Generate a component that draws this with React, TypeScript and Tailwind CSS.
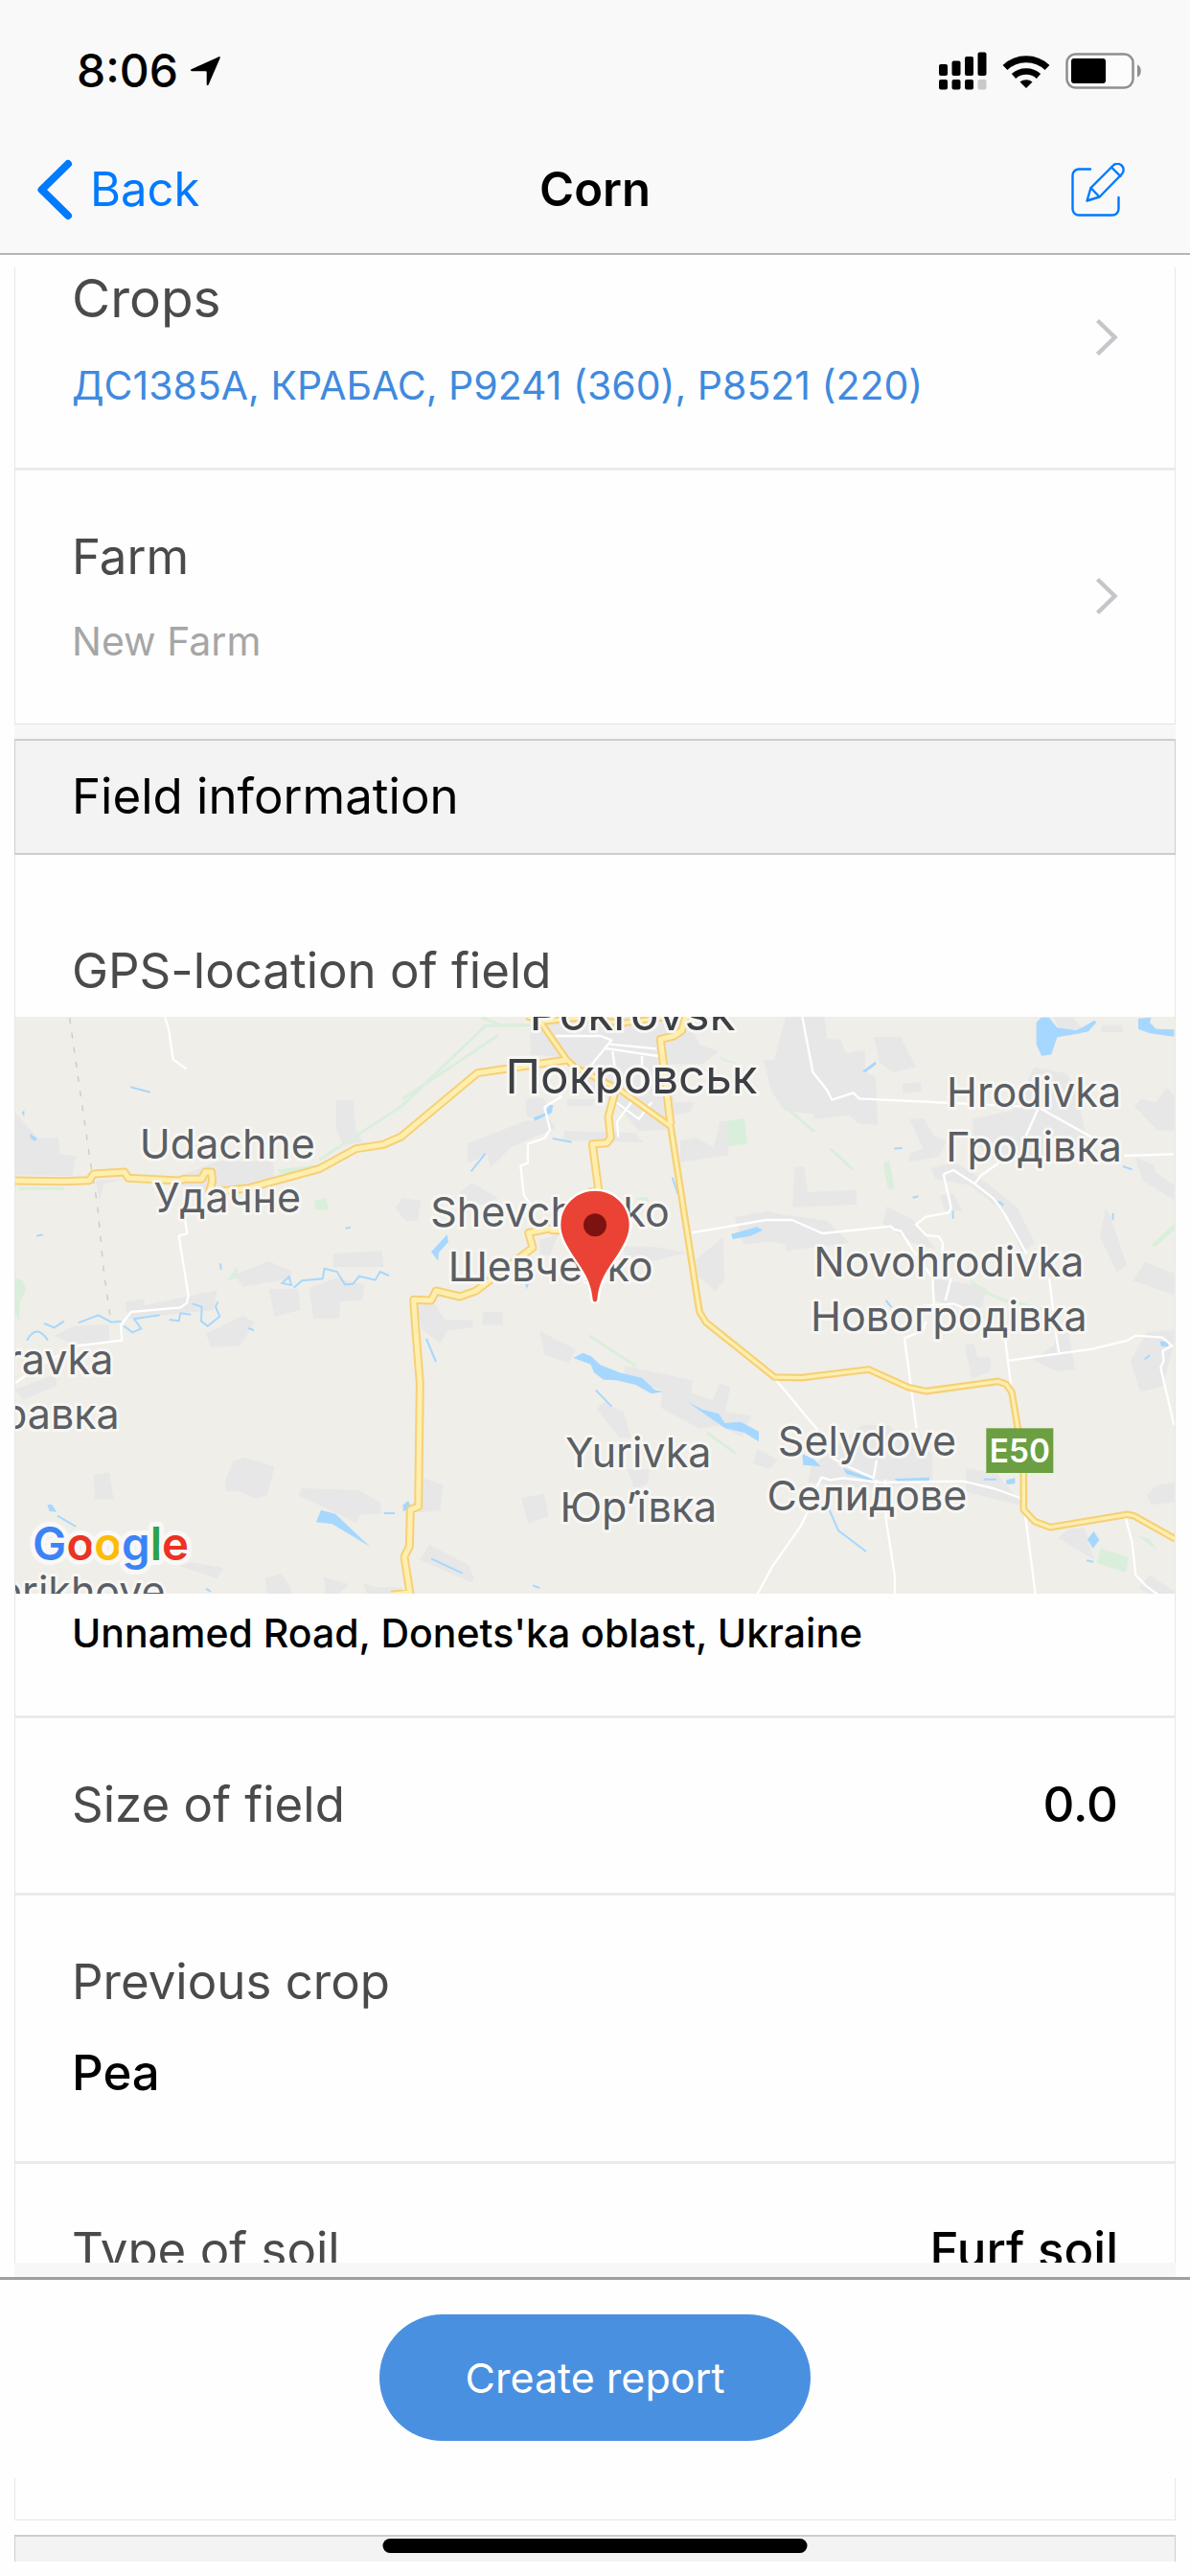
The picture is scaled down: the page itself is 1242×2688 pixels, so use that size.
import type { ReactNode } from 'react'
import { cx } from 'class-variance-authority'

interface MapLabelProps {
  x: number
  y: number
  children: string
  anchor?: 'start' | 'middle' | 'end'
  city?: boolean
}

interface RowProps {
  children: ReactNode
  last?: boolean
}

interface LinkRowProps {
  title: ReactNode
  value: string
  valueClassName: string
  last?: boolean
}

function StatusBar() {
  return (
    <div className="flex h-[132px] items-center justify-between pt-4 pr-[50px] pl-20">
      <div className="flex items-center gap-3">
        <span className="text-[48px] leading-[60px] font-medium">8:06</span>
        <svg viewBox="0 0 32 32" className="size-8" aria-hidden>
          <path d="M30.5 1.2c.9-.4 1.6.4 1.2 1.3L19.6 30.4c-.5 1.1-1.9.9-1.9-.3V17.3a1 1 0 0 0-1-1H2c-1.2 0-1.4-1.5-.3-2Z" />
        </svg>
      </div>
      <div className="flex items-center gap-4">
        <svg viewBox="0 0 50 40" className="h-10 w-[50px]" aria-hidden>
          <rect x="0" y="13" width="9" height="12" rx="2" />
          <rect x="13.5" y="9.5" width="9" height="15.5" rx="2" />
          <rect x="27" y="5" width="9" height="20" rx="2" />
          <rect x="40.5" y="0.5" width="9" height="24.5" rx="2" />
          <rect x="0" y="29" width="9" height="10.5" rx="2" />
          <rect x="13.5" y="29" width="9" height="10.5" rx="2" />
          <rect x="27" y="29" width="9" height="10.5" rx="2" />
          <rect x="40.5" y="29" width="9" height="10.5" rx="2" fill="#c9c9c9" />
        </svg>
        <svg viewBox="0 0 50 36" className="h-9 w-[50px]" aria-hidden>
          <path d="M3 14.5a32 32 0 0 1 44 0" fill="none" stroke="#000" strokeWidth="7" />
          <path d="M12 23.5a19.5 19.5 0 0 1 26 0" fill="none" stroke="#000" strokeWidth="6.5" />
          <path d="M18.5 29.6a10 10 0 0 1 13 0L25 36Z" />
        </svg>
        <svg viewBox="0 0 80 38" className="h-[38px] w-20" aria-hidden>
          <rect x="1.5" y="1.5" width="69" height="35" rx="9" fill="#fcfcfc" stroke="#8f8f8f" strokeWidth="2.5" />
          <rect x="6" y="6" width="36" height="26" rx="3" />
          <path d="M75 12.5c5 2 5 11 0 13Z" fill="#8f8f8f" />
        </svg>
      </div>
    </div>
  )
}

function NavBar() {
  return (
    <nav className="grid h-[132px] grid-cols-3 items-center px-[38px] text-[49px] leading-[60px]">
      <a href="#back" className="flex items-center gap-[18px] justify-self-start text-[#007aff]">
        <svg viewBox="0 0 38 64" className="h-16 w-[38px]" fill="none" aria-hidden>
          <path d="M33 5 5.5 32 33 59" stroke="currentColor" strokeWidth="8" strokeLinecap="round" strokeLinejoin="round" />
        </svg>
        Back
      </a>
      <h1 className="text-center font-semibold">Corn</h1>
      <button type="button" aria-label="Edit" className="mr-[30px] justify-self-end text-[#007aff]">
        <svg
          viewBox="0 0 56 56"
          className="size-14"
          fill="none"
          stroke="currentColor"
          strokeWidth="2.4"
          strokeLinecap="round"
          strokeLinejoin="round"
          aria-hidden
        >
          <path d="M20 6.5H8A6.5 6.5 0 0 0 1.5 13v35A6.5 6.5 0 0 0 8 54.5h35a6.5 6.5 0 0 0 6.5-6.5V36" />
          <path d="M16.5 39.5 20.5 26 43.5 3a6 6 0 0 1 9.5 8.5L29.5 35.5Z" />
          <path d="M20.5 26 29.5 35.5M42 4.500l9.500 9.500" />
        </svg>
      </button>
    </nav>
  )
}

function Chevron() {
  return (
    <svg viewBox="0 0 24 40" className="h-10 w-6 shrink-0" fill="none" aria-hidden>
      <path d="M2.5 2.5 20.5 20 2.5 37.5" stroke="#c5c5ca" strokeWidth="4.5" />
    </svg>
  )
}

function Row({ children, last = false }: RowProps) {
  return (
    <div className={cx('px-[59px] pt-[60px] pb-[62px]', last ? 'border-b border-[#e3e3e3]' : 'border-b-3 border-[#ebebeb]')}>
      {children}
    </div>
  )
}

function LinkRow({ title, value, valueClassName, last }: LinkRowProps) {
  return (
    <Row last={last}>
      <button type="button" className="flex w-full items-center justify-between text-left">
        <span className="flex flex-col gap-[34px]">
          {title}
          <span className={cx('text-[41px] leading-[48px]', valueClassName)}>{value}</span>
        </span>
        <Chevron />
      </button>
    </Row>
  )
}

function MapLabel({ x, y, children, anchor = 'middle', city = false }: MapLabelProps) {
  return (
    <text
      x={x}
      y={y}
      textAnchor={anchor}
      fontSize={city ? 148 : 129}
      fill={city ? '#3c3f43' : '#5b5f64'}
      stroke="#f7f6f3"
      strokeWidth="18"
      strokeLinejoin="round"
      paintOrder="stroke"
    >
      {children}
    </text>
  )
}

const builtUp = [
  'M48 332 118 412 182 410 188 462 238 468 226 530 48 528Z',
  'M1052 293h54l8 96 22 36-60 8-24-50Z',
  'M570 528 680 484h176v74L660 578 570 560Z',
  'M300 545 395 540 325 555 312 610Z',
  'M1044 774 1196 765 1202 815H1044Z',
  'M732 840 842 798 912 828v22l-150 28Z',
  'M842 884h92l6 66-80 20Z',
  'M968 880 1058 848l84 24-8 48-68 2-4 54h-80Z',
  'M392 925 450 915 455 935 570 910 680 888 668 950 400 978Z',
  'M230 1000 342 995v60H225l-55-25Z',
  'M645 1024 760 968 797 988 752 1062 660 1066Z',
  'M48 1198 170 1152 180 1185 72 1232Z',
  'M292 1466 342 1458 356 1543H297Z',
  'M706 1480 730 1424 766 1411 860 1440 836 1530 800 1540 750 1518 706 1518Z',
  'M935 1530 945 1508 1125 1514 1192 1554V1588L1130 1590 1115 1616Z',
  'M560 1750 600 1740 700 1758 680 1790Z',
  'M830 1790 880 1776 912 1820V1840H838Z',
  'M1014 1786 1092 1808 1060 1840H1020Z',
  'M1138 1806 1180 1818H1260V1840H1150Z',
  'M1238 630 1260 600 1318 608 1308 670 1270 672Z',
  'M1462 430 1640 360 1720 352 1740 380 1600 440 1535 506 1525 462 1466 490Z',
  'M1660 32H2150L2190 120 2250 140 2200 180H2100L2110 300 2176 300 2160 330 2105 340 2090 385 2000 390 1960 340 1900 280 1830 250 1780 160 1660 150Z',
  'M1645 290 1700 285 1730 330 1700 360 1650 345Z',
  'M1775 290H1858V312H1775Z',
  'M1765 390 1990 395 2012 425 1765 420Z',
  'M2130 420 2180 410 2235 442 2255 360 2282 358 2280 465 2130 488Z',
  'M1440 580 1478 552 1560 600 1520 620 1440 612Z',
  'M1950 750 2050 752 2150 770 2050 796 1960 800Z',
  'M1690 730 1750 712 1720 780 1690 776Z',
  'M1300 920 1360 930 1392 980 1480 982V1005L1400 1015 1378 1055 1320 1010Z',
  'M1512 955h62v42h-65Z',
  'M2180 790 2264 722 2268 855 2240 890 2180 840Z',
  'M2300 660 2400 640 2520 668 2640 740 2500 752 2410 735 2330 745Z',
  'M1690 1016 1804 1074 1780 1116 1705 1090Z',
  'M1955 1125 2170 1170 2164 1208 2230 1232 2255 1180 2286 1190 2270 1270 2352 1280 2325 1348 2250 1310 2190 1322 2068 1255 2075 1202 1955 1160Z',
  'M1868 1260 1890 1238 1952 1268 1976 1350 1940 1350Z',
  'M1322 1475 1388 1498 1378 1578 1310 1584Z',
  'M1632 1538 1704 1525 1718 1596 1654 1618Z',
  'M1962 1448H2032L2030 1490 1990 1515Z',
  'M1315 1732 1344 1684 1470 1750 1485 1794 1475 1802Z',
  'M2358 1430 2372 1384 2434 1418 2412 1448Z',
  'M2460 32h120l10 68 44 4 14 42 60-10v68l34 18 6 150-60-6-28-26-110 12-4-16-90-10-40-60-26-100h35Z',
  'M2736 95h84l48 94-70 18-44-32Z',
  'M2826 242 2884 236V266L2828 272Z',
  'M3238 190 3340 210 3370 260 3405 430 3310 470 3100 480 3046 410V352L3170 325Z',
  'M3448 58H3514V80H3448ZM3300 34 3360 34 3390 70 3320 74Z',
  'M2848 352 2892 350 2925 405 2965 420 2940 470 2846 486 2848 460 2890 445Z',
  'M2488 502h30l12 78 152-6v46l-200 8Z',
  'M2914 506 2990 485 3100 560 3185 630 3240 740 3200 770 3140 640 3040 560 2930 540Z',
  'M2942 592 2985 585 3014 640 2960 640Z',
  'M2776 626 2860 668 2930 760 2860 740 2764 680Z',
  'M3552 312 3572 290 3620 300 3652 254 3676 280V388H3625Z',
  'M3462 632 3478 660 3528 808 3498 832 3444 722Z',
  'M3546 858 3585 800 3676 835V902Z',
  'M3554 472 3615 498 3620 520 3676 560V605L3578 545Z',
  'M2920 850 3090 880 3075 940 3020 950 2930 920Z',
  'M2460 652 2590 670 2660 740 2460 765Z',
  'M3020 1058 3050 1054 3060 1098 3102 1098V1142L3042 1165Z',
  'M3234 1106 3300 1060 3310 1020 3345 1020 3366 1136 3310 1142Z',
  'M3540 1110 3590 1020 3676 1012V1050L3640 1190 3570 1205Z',
  'M3590 1530 3620 1500 3676 1490V1550L3605 1560Z',
  'M2530 1490 2540 1440 2700 1310 2780 1310 2920 1400V1480L2740 1510Z',
  'M3025 1446 3120 1460 3192 1548V1560L3025 1520Z',
  'M3312 1664 3345 1636 3395 1630 3425 1730Z',
  'M3565 1820 3600 1780 3676 1830V1840H3600Z',
]

const woods = [
  'M48 852 70 856 82 885 62 925 60 990 48 960Z',
  'M985 608 1020 600 1030 638 985 634Z',
  'M712 856 745 812 742 850Z',
  'M868 510 1000 495 980 512 880 525Z',
  'M2276 358 2330 350 2340 430 2280 436Z',
  'M2765 490 2785 482 2800 570 2780 572Z',
  'M2248 155 2330 188 2260 168Z',
  'M3445 1695 3535 1725 3525 1772 3435 1742Z',
  'M3560 1655 3600 1666 3625 1704Z',
  'M3600 750 3676 680V700L3620 750Z',
  'M1985 600 2030 596 2030 612Z',
]

const greenLines = [
  'M1000 480 1260 310 1520 60 1640 56',
  'M1260 290 1560 90',
  'M1510 34 1570 60 1660 58',
  'M60 570H200',
  'M2460 315 2550 392',
  'M2600 445 2670 510',
  'M3040 860Q3110 920 3200 930 3300 960 3370 960',
  'M1845 1030 1990 1125',
  'M2215 1335 2305 1400',
]

const lakes = [
  'M3245 50 3260 34 3285 34 3310 66 3370 74 3395 62 3425 44 3434 48 3408 78 3370 86 3310 96 3292 150 3262 155 3245 120Z',
  'M3564 38 3604 34 3600 50 3620 70 3676 72V94L3600 84 3564 70Z',
  'M94 398 116 412 110 422 96 412ZM68 332 76 324V346Z',
  'M1350 768 1400 714 1404 736 1374 770 1372 796Z',
  'M1670 348 1705 334 1720 308 1732 308 1728 332 1675 358Z',
  'M2290 712 2370 690 2388 700 2350 718 2294 728Z',
  'M1795 1100 1825 1084 1850 1094 1880 1122 1940 1146 2010 1162 2050 1200 2078 1206 2040 1212 1990 1184 1930 1170 1890 1168 1860 1146 1850 1120Z',
  'M2150 1236 2200 1262 2250 1274 2270 1304 2320 1300 2376 1330V1362L2330 1334 2270 1320 2220 1285Z',
  'M990 1614 1005 1576 1050 1588 1158 1690 1040 1620Z',
  'M2700 202 2740 172 2745 180 2710 206Z',
  'M3405 1668 3425 1642 3442 1670 3422 1696Z',
  'M148 1560 162 1558 178 1582 155 1580Z',
  'M2512 1400 2550 1418 2570 1440 2515 1435ZM2640 1445 2730 1478 2735 1486 2650 1464Z',
  'M2800 1478 2910 1474V1490L2810 1486Z',
  'M1262 1560 1278 1548 1290 1570 1262 1580Z',
  'M3150 1482 3178 1476V1494L3152 1496ZM3632 1048H3658V1064H3636Z',
  'M1645 870 1665 840 1650 885Z',
]

const streams = [
  'M408 252 470 268',
  'M84 1045Q115 990 150 1045M138 992 170 1005 200 985M245 990 308 966 348 988 380 985',
  'M388 1000 415 1020 442 1008 420 978 500 966M530 980 560 984 565 960 598 964M602 930 632 940 630 985 650 1000 688 970 675 940 682 924',
  'M883 866 905 846 912 872ZM920 880 945 858 1010 852 1016 820 1055 830 1080 870 1105 868 1125 844 1175 856 1190 830 1218 842',
  'M1475 516 1520 460',
  'M1730 413 1790 424',
  'M2105 535 2122 585',
  'M1335 1040 1365 1112',
  'M1865 1200 1915 1252',
  'M180 1594 238 1628',
  'M1350 1728 1448 1774',
  'M2595 1572 2625 1640 2712 1706',
  'M115 718 134 714M1082 694 1098 691M690 804 692 824M778 1006 795 1014M645 1822 660 1832M1202 1586H1236M1668 1812 1690 1820',
  'M2800 445 2825 442M2858 598 2875 594M2984 640V664M3126 610 3142 622M3485 646V668M2774 920 2792 942M3516 500 3545 510M3080 1480H3120M3584 1104 3600 1092M3402 1734 3424 1738',
]

const lanes = [
  'M516 32 528 70 542 165 584 196',
  'M575 640 586 710 560 718 590 905 585 928 565 942 410 956 378 998 382 1045 240 1062 130 1120 48 1178',
  'M1740 92H1880L1915 105 1850 185M1890 130 2060 155M1910 118 2055 132M1918 140 1925 190M2010 155V260',
  'M1760 280 1705 315 1722 385 1705 412 1653 430V490L1630 498 1640 590 1665 625',
  'M1930 300 2000 352 2040 300M1980 295 1932 360 1936 408',
  'M2165 708 2400 668 2480 668 2575 710 2790 688 2800 698 2820 702 2850 750 2920 850 2924 930',
  'M2512 32 2545 205 2590 262 2605 292 2672 270 2690 288 2980 302 3250 315 3420 410',
  'M3250 320 3210 410M3520 467 3676 462',
  'M3140 480 3070 530 3052 555M2954 525 2985 512 3052 555 3110 600 3145 648 3215 775',
  'M2954 525 2978 630 2970 645 2900 658 2868 682 2900 716 2940 720 2952 740 2950 790M2978 850 2960 920M2890 938 2985 930 3020 945',
  'M3285 850 3310 1050 3316 1085',
  'M2900 985 2890 1015 2832 1038 2870 1320M3145 1020 3165 1185',
  'M3160 1108 3420 1072 3530 1045 3555 1030 3640 1036 3670 1062 3640 1078 3644 1108 3634 1130 3676 1310',
  'M2430 1170 2560 1325M2600 1410 2660 1442 2735 1476 2745 1420M2530 1560 2572 1474 2600 1482 2640 1476 2760 1490 3015 1486 3110 1508 3195 1538',
  'M2745 1480 2740 1500M2540 1560 2505 1630 2420 1750 2372 1838',
  'M2772 1480 2775 1610 2802 1785V1840',
  'M3210 1590 3242 1840M3525 1600 3545 1680 3556 1780 3590 1815 3625 1840',
]

const highways = [
  'M48 545 200 547 280 544 293 524 390 518 402 537 560 545 575 540 632 540 642 518 662 518 665 545 655 582 780 568 1000 508 1115 445 1200 432 1255 408 1495 208 1775 167',
  'M1925 270 1905 345 1912 410 1900 427 1855 430 1875 580 1850 580 1830 700 1730 700 1720 695 1655 708 1668 755 1490 890 1440 908 1365 890 1350 920 1295 918 1300 990 1315 1180 1310 1565 1285 1575 1282 1690 1266 1722 1285 1845',
  'M2148 30 2135 75 2110 92 2068 102 2100 370',
  'M1225 1842 1285 1835',
]

const trunkRoads = [
  'M1650 30 1690 45 1775 167 1800 190 1940 260 2100 375 2190 955 2210 988 2425 1160 2510 1162 2720 1136 2845 1192 2900 1204 3125 1173 3150 1182 3168 1207 3187 1320 3205 1460V1575L3240 1612 3288 1630 3530 1590 3550 1594 3680 1667',
  'M1690 48 1800 36 1950 52 2080 34',
]

function FieldMap() {
  return (
    <svg
      viewBox="48 32 3630 1806"
      preserveAspectRatio="xMidYMid slice"
      className="block h-[602px] w-full bg-[#f0eee8]"
      role="img"
      aria-label="Map of the field location"
    >
      <path d={builtUp.join('')} fill="#e7e7e7" />
      <path d={woods.join('')} fill="#d9efdc" />
      <path d={greenLines.join('')} fill="none" stroke="#d9efdc" strokeWidth="9" />
      <path d={lakes.join('')} fill="#a6d8ff" />
      <path d={streams.join('')} fill="none" stroke="#a6d8ff" strokeWidth="6" />
      <path
        d="M218 36 250 260 285 500 305 620 325 830 345 970"
        fill="none"
        stroke="#c9c9c9"
        strokeWidth="4"
        strokeDasharray="18 28"
      />
      <path d={lanes.join('')} fill="none" stroke="#fff" strokeWidth="7" strokeLinejoin="round" />
      <g fill="none" strokeLinejoin="round">
        <path d={highways.join('')} stroke="#f6d077" strokeWidth="27" />
        <path d={trunkRoads.join('')} stroke="#f6d077" strokeWidth="23" />
        <path d={highways.join('')} stroke="#ffefae" strokeWidth="15" />
        <path d={trunkRoads.join('')} stroke="#ffefae" strokeWidth="10" />
      </g>

      <MapLabel x={712} y={475}>Udachne</MapLabel>
      <MapLabel x={712} y={645}>Удачне</MapLabel>
      <MapLabel x={1980} y={75} city>Pokrovsk</MapLabel>
      <MapLabel x={1977} y={273} city>Покровськ</MapLabel>
      <MapLabel x={1722} y={690}>Shevchenko</MapLabel>
      <MapLabel x={1724} y={861}>Шевченко</MapLabel>
      <MapLabel x={3237} y={315}>Hrodivka</MapLabel>
      <MapLabel x={3237} y={486}>Гродівка</MapLabel>
      <MapLabel x={2971} y={846}>Novohrodivka</MapLabel>
      <MapLabel x={2971} y={1017}>Новогродівка</MapLabel>
      <MapLabel x={355} y={1150} anchor="end">ravka</MapLabel>
      <MapLabel x={374} y={1321} anchor="end">равка</MapLabel>
      <MapLabel x={1999} y={1443}>Yurivka</MapLabel>
      <MapLabel x={1999} y={1614}>Юрʼївка</MapLabel>
      <MapLabel x={2715} y={1405}>Selydove</MapLabel>
      <MapLabel x={2715} y={1576}>Селидове</MapLabel>
      <MapLabel x={518} y={1876} anchor="end">orikhove</MapLabel>

      <rect x="3088" y="1320" width="210" height="140" fill="#6b9f42" />
      <text x="3193" y="1427" textAnchor="middle" fontSize="100" fontWeight="600" fill="#fff">
        E50
      </text>

      <text
        x="102"
        y="1732"
        fontSize="142"
        fontWeight="600"
        stroke="#f9f8f6"
        strokeWidth="30"
        strokeLinejoin="round"
        paintOrder="stroke"
      >
        <tspan fill="#3c83f6">G</tspan>
        <tspan fill="#ea3323">o</tspan>
        <tspan fill="#fcbc05">o</tspan>
        <tspan fill="#3c83f6">g</tspan>
        <tspan fill="#2ba24c">l</tspan>
        <tspan fill="#ea3323">e</tspan>
      </text>

      <path
        d="M1863 577c-60 0-107 47-107 106 0 34 16 60 32 86 30 48 62 80 68 148 1 10 13 10 14 0 6-68 38-100 68-148 16-26 32-52 32-86 0-59-47-106-107-106Z"
        fill="#ea4335"
        stroke="#fff"
        strokeWidth="14"
        paintOrder="stroke"
      />
      <circle cx="1863" cy="684" r="36" fill="#7d1310" />
    </svg>
  )
}

export default function App() {
  return (
    <div className="relative flex h-screen flex-col overflow-hidden bg-[#fefefe] font-[Inter,'Liberation_Sans',sans-serif] text-black">
      <header className="border-b-2 border-[#b5b5b5] bg-[#f9f9f9]">
        <StatusBar />
        <NavBar />
      </header>

      <main className="mr-[15px] ml-[15px] mt-[13px] min-h-0 flex-1 overflow-hidden bg-[#f7f7f7]">
        {/* list is scrolled part way into the first row */}
        <section className="-mt-[61px] border-x border-[#e6e6e6] bg-[#fefefe]">
          <LinkRow
            title={<span className="text-[55px] leading-[66px] text-[#4a4a4a]">Crops</span>}
            value="ДС1385А, КРАБАС, Р9241 (360), Р8521 (220)"
            valueClassName="text-[#408ade]"
          />
          <LinkRow
            title={<span className="text-[51px] leading-[60px] text-[#4a4a4a]">Farm</span>}
            value="New Farm"
            valueClassName="text-[#a6a6a6]"
            last
          />
        </section>

        <h2 className="mt-[15px] border-x border-y-2 border-[#cdcdcd] bg-[#f3f3f3] px-[59px] pt-7 pb-[29px] text-[51px] leading-[60px]">
          Field information
        </h2>

        <section className="border-x border-[#e6e6e6] bg-[#fefefe] text-[51px] leading-[60px] text-[#4a4a4a]">
          <div className="border-b-3 border-[#ebebeb] pt-[91px] pb-[62px]">
            <h3 className="px-[59px] pb-[18px]">GPS-location of field</h3>
            <FieldMap />
            <p className="px-[59px] pt-[17px] text-[41px] leading-[48px] font-medium text-black">
              Unnamed Road, Donets'ka oblast, Ukraine
            </p>
          </div>
          <Row>
            <div className="flex justify-between">
              <span>Size of field</span>
              <span className="font-medium text-black">0.0</span>
            </div>
          </Row>
          <Row>
            <div className="flex flex-col gap-[35px]">
              <span>Previous crop</span>
              <span className="font-medium text-black">Pea</span>
            </div>
          </Row>
          <Row>
            <div className="flex justify-between">
              <span>Type of soil</span>
              <span className="font-medium text-black">Furf soil</span>
            </div>
          </Row>
        </section>
      </main>

      <div className="mx-[15px] h-[15px] bg-[#f7f7f7]" />

      <footer className="flex justify-center border-t-3 border-[#a0a0a0] pt-9 pb-[39px]">
        <button type="button" className="h-[132px] w-[450px] rounded-full bg-[#4a90e0] text-[43px] leading-[60px] text-white">
          Create report
        </button>
      </footer>

      <div className="mx-[15px] h-11 border-x border-b border-[#e6e6e6]" />
      <div className="mx-[15px] mt-[15px] mb-[15px] h-7 border-x border-t-2 border-[#cdcdcd] bg-[#f3f3f3]" />
      <div className="absolute bottom-6 left-1/2 h-[15px] w-[443px] -translate-x-1/2 rounded-full bg-black" />
    </div>
  )
}
